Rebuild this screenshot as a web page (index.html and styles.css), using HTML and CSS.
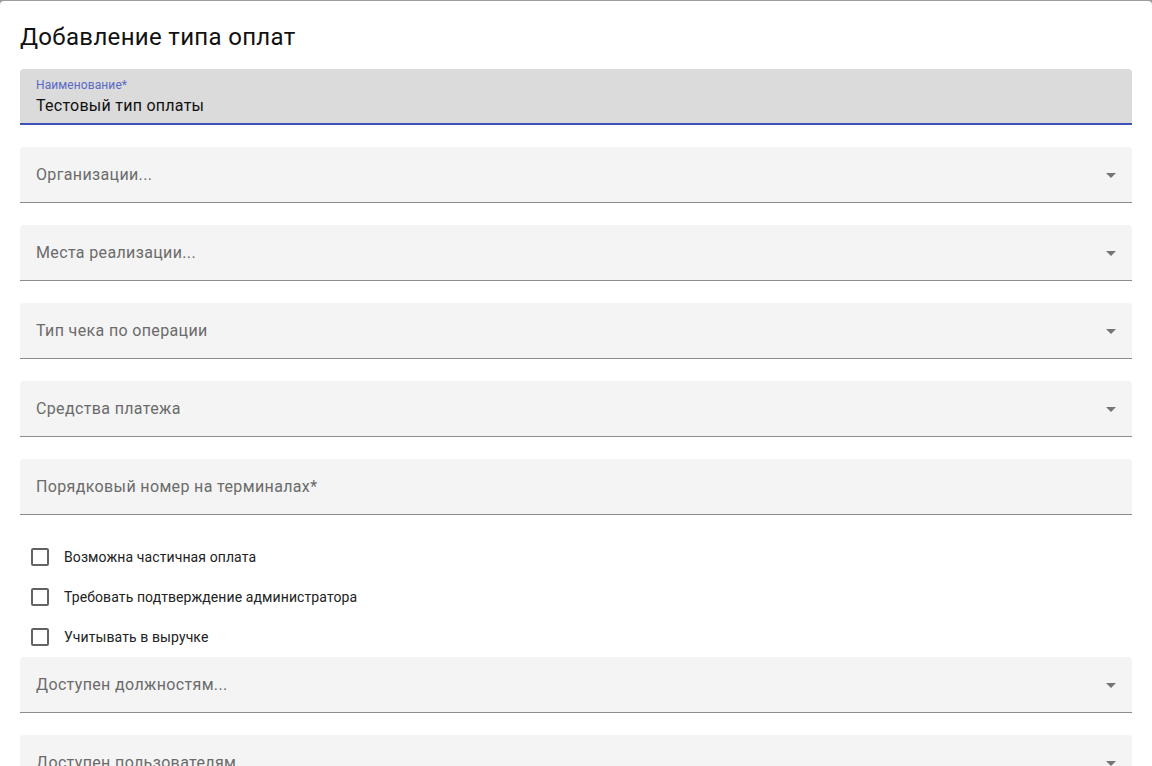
FILE: index.html
```html
<!DOCTYPE html>
<html lang="ru">
<head>
<meta charset="utf-8">
<title>Добавление типа оплат</title>
<link rel="stylesheet" href="styles.css">
</head>
<body>

<div class="dialog">
	<h2 class="dialog-title">Добавление типа оплат</h2>

	<form class="payment-form">
		<!-- name field, focused -->
		<div class="field">
			<div class="field-box focused">
				<div class="field-infix">
					<label class="field-label">Наименование*</label>
					<input class="field-input" type="text" value="Тестовый тип оплаты">
				</div>
			</div>
		</div>

		<div class="field">
			<div class="field-box">
				<div class="field-infix"><span class="placeholder">Организации...</span></div>
				<span class="select-arrow"></span>
			</div>
		</div>

		<div class="field">
			<div class="field-box">
				<div class="field-infix"><span class="placeholder">Места реализации...</span></div>
				<span class="select-arrow"></span>
			</div>
		</div>

		<div class="field">
			<div class="field-box">
				<div class="field-infix"><span class="placeholder">Тип чека по операции</span></div>
				<span class="select-arrow"></span>
			</div>
		</div>

		<div class="field">
			<div class="field-box">
				<div class="field-infix"><span class="placeholder">Средства платежа</span></div>
				<span class="select-arrow"></span>
			</div>
		</div>

		<div class="field">
			<div class="field-box">
				<div class="field-infix"><span class="placeholder">Порядковый номер на терминалах*</span></div>
			</div>
		</div>

		<!-- flags -->
		<div class="checks">
			<label class="check"><span class="check-box"></span>Возможна частичная оплата</label>
			<label class="check"><span class="check-box"></span>Требовать подтверждение администратора</label>
			<label class="check"><span class="check-box"></span>Учитывать в выручке</label>
		</div>

		<div class="field">
			<div class="field-box">
				<div class="field-infix"><span class="placeholder">Доступен должностям...</span></div>
				<span class="select-arrow"></span>
			</div>
		</div>

		<div class="field">
			<div class="field-box">
				<div class="field-infix"><span class="placeholder">Доступен пользователям...</span></div>
				<span class="select-arrow"></span>
			</div>
		</div>
	</form>
</div>

</body>
</html>
```

FILE: styles.css
```css
html, body {
	height: 100%;
}
body {
	margin: 0;
	padding: 1px 0 0 0;
	box-sizing: border-box;
	background-color: #9c9c9c;
	font-family: Roboto, "Liberation Sans", Arial, sans-serif;
	color: rgba(0, 0, 0, 0.87);
	overflow: hidden;
}
.dialog {
	background-color: #fff;
	border-radius: 4px 4px 0 0;
	height: 100%;
	padding: 20px 20px 0 20px;
	box-sizing: border-box;
}
.dialog-title {
	margin: 0 0 16px 0;
	font-size: 24px;
	font-weight: 400;
	line-height: 32px;
	letter-spacing: 0.32px;
	color: #111;
}
.payment-form {
	display: flex;
	flex-direction: column;
}
.field {
	padding-bottom: 22px;
}
.field-box {
	display: flex;
	align-items: center;
	height: 56px;
	box-sizing: border-box;
	padding: 0 16px;
	background-color: #f4f4f4;
	border-radius: 4px 4px 0 0;
	border-bottom: 1px solid #8c8c8c;
}
.field-box.focused {
	background-color: #dbdbdb;
	border-bottom: 2px solid #3f51b5;
}
.field-infix {
	flex: 1;
	display: flex;
	flex-direction: column;
}
.field-label {
	font-size: 12px;
	line-height: 14px;
	letter-spacing: 0.1px;
	color: #5a69c4;
	margin-top: 2px;
}
.field-input {
	border: 0;
	outline: none;
	background: transparent;
	padding: 0;
	margin-top: 4px;
	font-family: inherit;
	font-size: 16px;
	line-height: 20px;
	letter-spacing: 0.26px;
	color: #111;
}
.placeholder {
	font-size: 16px;
	line-height: 20px;
	letter-spacing: 0.36px;
	color: #6b6b6b;
	margin-top: 1px;
}
.select-arrow {
	width: 0;
	height: 0;
	border-left: 5px solid transparent;
	border-right: 5px solid transparent;
	border-top: 5px solid #757575;
	margin-top: 2px;
}
.checks {
	display: flex;
	flex-direction: column;
}
.check {
	display: flex;
	align-items: center;
	height: 40px;
	padding-left: 11px;
	font-size: 14px;
	letter-spacing: 0.1px;
	color: #222;
}
.check-box {
	width: 18px;
	height: 18px;
	box-sizing: border-box;
	border: 2px solid #636363;
	border-radius: 2px;
	margin-right: 15px;
}
```
